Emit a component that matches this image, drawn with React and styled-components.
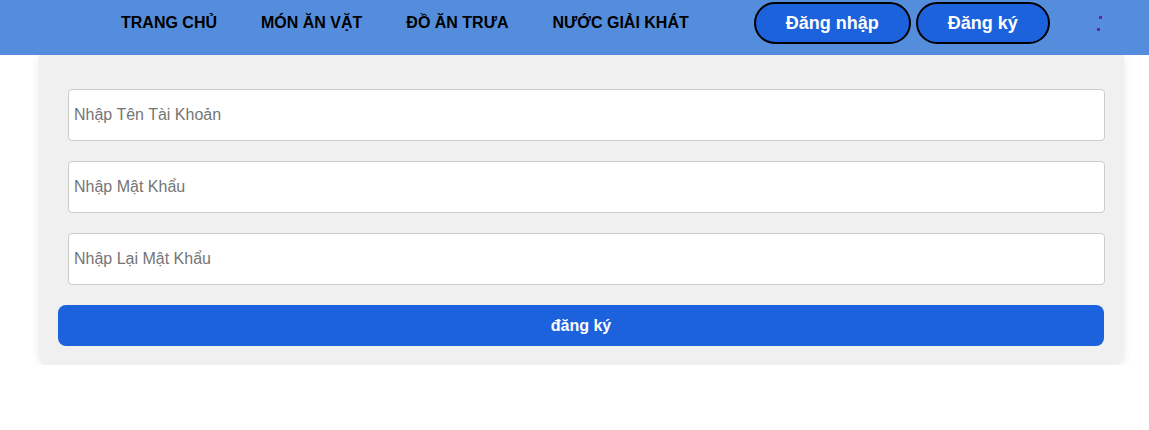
import styled, { createGlobalStyle } from 'styled-components';

const GlobalStyle = createGlobalStyle`
  * {
    box-sizing: border-box;
  }
  body {
    margin: 0;
    background: #ffffff;
    font-family: 'Liberation Sans', Arial, sans-serif;
  }
`;

const Header = styled.header`
  height: 55px;
  background: #548ddc;
  display: flex;
  align-items: flex-start;
  padding-top: 2px;
  position: relative;
  z-index: 2;
`;

const Nav = styled.nav`
  display: flex;
  align-items: center;
  height: 42px;
  gap: 44px;
  padding-left: 121px;
`;

const NavLink = styled.a`
  font-size: 16px;
  font-weight: 700;
  color: #000000;
  text-decoration: none;
  white-space: nowrap;
`;

const Actions = styled.div`
  display: flex;
  gap: 5px;
  margin-left: 65px;
`;

const PillButton = styled.button`
  height: 42px;
  padding: 0 30px;
  border: 2px solid #000000;
  border-radius: 21px;
  background: #1c62dc;
  color: #ffffff;
  font-family: 'Liberation Sans', Arial, sans-serif;
  font-size: 18px;
  font-weight: 700;
  cursor: pointer;
`;

const MenuDots = styled.div`
  margin-left: 46px;
  height: 42px;
  display: flex;
  align-items: center;
`;

const Main = styled.main`
  padding: 0 25px 0 39px;
`;

const Card = styled.form`
  width: 1085px;
  background: #f0f0f0;
  border-radius: 0 0 10px 10px;
  box-shadow: 0 2px 10px rgba(0, 0, 0, 0.09);
  padding: 34px 20px 19px 19px;
  display: flex;
  flex-direction: column;
  gap: 20px;
`;

const Field = styled.input`
  display: block;
  margin-left: 10px;
  width: 1037px;
  height: 52px;
  border: 1px solid #cccccc;
  border-radius: 4px;
  background: #ffffff;
  padding: 0 5px;
  font-family: 'Liberation Sans', Arial, sans-serif;
  font-size: 16px;
  color: #333333;
  outline: none;

  &::placeholder {
    color: #757575;
  }
`;

const Submit = styled.button`
  height: 41px;
  width: 100%;
  border: none;
  border-radius: 8px;
  background: #1c62dc;
  color: #ffffff;
  font-family: 'Liberation Sans', Arial, sans-serif;
  font-size: 16px;
  font-weight: 700;
  cursor: pointer;
`;

const navItems = ['TRANG CHỦ', 'MÓN ĂN VẶT', 'ĐỒ ĂN TRƯA', 'NƯỚC GIẢI KHÁT'];

export default function App() {
  return (
    <>
      <GlobalStyle />
      <Header>
        <Nav>
          {navItems.map((item) => (
            <NavLink key={item} href="#">{item}</NavLink>
          ))}
        </Nav>
        <Actions>
          <PillButton type="button">Đăng nhập</PillButton>
          <PillButton type="button">Đăng ký</PillButton>
        </Actions>
        <MenuDots>
          <svg width="6" height="16" viewBox="0 0 6 16">
            <rect x="3" y="1" width="3" height="3" fill="#6a23a8" />
            <rect x="1" y="13" width="3" height="3" fill="#6a23a8" />
          </svg>
        </MenuDots>
      </Header>
      <Main>
        <Card onSubmit={(e) => e.preventDefault()}>
          <Field type="text" placeholder="Nhập Tên Tài Khoản" />
          <Field type="password" placeholder="Nhập Mật Khẩu" />
          <Field type="password" placeholder="Nhập Lại Mật Khẩu" />
          <Submit type="submit">đăng ký</Submit>
        </Card>
      </Main>
    </>
  );
}
